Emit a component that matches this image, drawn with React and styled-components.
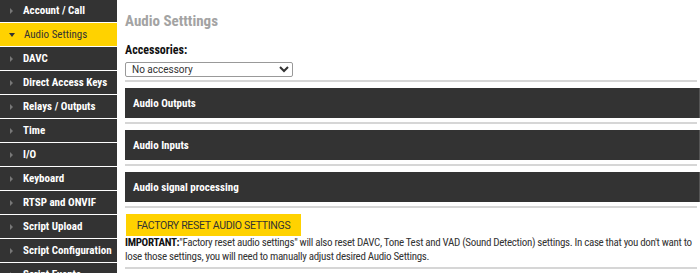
import React from "react";
import styled, { createGlobalStyle } from "styled-components";

const GlobalStyle = createGlobalStyle`
  body {
    margin: 0;
    background: #fff;
    font-family: "Liberation Sans Narrow", "Roboto Condensed", Roboto, sans-serif;
    overflow: hidden;
  }
`;

const Page = styled.div`
  display: flex;
  width: 700px;
  height: 273px;
  overflow: hidden;
`;

const Sidebar = styled.nav`
  width: 117px;
  flex-shrink: 0;
  display: flex;
  flex-direction: column;
  gap: 1px;
  margin-top: -1px;
`;

const NavItem = styled.div`
  height: 23px;
  flex-shrink: 0;
  display: flex;
  align-items: center;
  background: ${({ active }) => (active ? "#ffd200" : "#333")};
  color: ${({ active }) => (active ? "#333" : "#fff")};
  font-size: 11px;
  font-weight: ${({ active }) => (active ? "normal" : "bold")};
  padding-left: 9px;
  white-space: nowrap;
`;

const Arrow = styled.span`
  width: 0;
  height: 0;
  ${({ open }) =>
    open
      ? `border-left: 3px solid transparent;
         border-right: 3px solid transparent;
         border-top: 4px solid #333;
         margin-right: 9px;`
      : `border-top: 3px solid transparent;
         border-bottom: 3px solid transparent;
         border-left: 3px solid #777;
         margin-left: 1px;
         margin-right: 10px;`}
`;

const Main = styled.main`
  flex: 1;
  min-width: 0;
  padding: 11px 2px 0 8px;
  display: flex;
  flex-direction: column;
  & > * {
    flex-shrink: 0;
  }
`;

const Title = styled.h1`
  margin: 0;
  font-size: 15px;
  font-weight: bold;
  color: #a3a3a3;
  line-height: 20px;
`;

const Label = styled.div`
  margin-top: 12px;
  font-size: 12px;
  font-weight: bold;
  color: #111;
  line-height: 14px;
`;

const Select = styled.select`
  margin-top: 5px;
  width: 168px;
  height: 15px;
  padding: 0 2px;
  font-family: "Liberation Sans Narrow", Roboto, sans-serif;
  font-size: 10px;
  color: #333;
  border: 1px solid #999;
  border-radius: 2px;
  background: #fff;
`;

const Rule = styled.div`
  height: 2px;
  margin-right: 1px;
  background: #d6d6d6;
  margin-top: ${({ top }) => top}px;
`;

const Section = styled.div`
  height: 30px;
  margin-top: 6px;
  margin-right: -2px;
  background: #333;
  border-right: 1px solid #555;
  color: #fff;
  font-size: 11px;
  font-weight: bold;
  display: flex;
  align-items: center;
  padding-left: 8px;
`;

const ResetButton = styled.button`
  margin: 6px 0 0 1px;
  align-self: flex-start;
  width: 175px;
  height: 22px;
  border: none;
  background: #ffd200;
  color: #333;
  font-family: "Liberation Sans Narrow", Roboto, sans-serif;
  font-size: 10.5px;
  letter-spacing: -0.3px;
  white-space: nowrap;
  padding: 0;
`;

const Note = styled.p`
  margin: 0;
  font-size: 11px;
  line-height: 13.5px;
  letter-spacing: -0.32px;
  color: #333;
  b {
    color: #111;
  }
`;

const navItems = [
  "Account / Call",
  "Audio Settings",
  "DAVC",
  "Direct Access Keys",
  "Relays / Outputs",
  "Time",
  "I/O",
  "Keyboard",
  "RTSP and ONVIF",
  "Script Upload",
  "Script Configuration",
  "Script Events",
];

const sections = ["Audio Outputs", "Audio Inputs", "Audio signal processing"];

export default function App() {
  return (
    <>
      <GlobalStyle />
      <Page>
        <Sidebar>
          {navItems.map((item) => {
            const active = item === "Audio Settings";
            return (
              <NavItem key={item} active={active}>
                <Arrow open={active} />
                {item}
              </NavItem>
            );
          })}
        </Sidebar>
        <Main>
          <Title>Audio Setttings</Title>
          <Label>Accessories:</Label>
          <Select defaultValue="none">
            <option value="none">No accessory</option>
          </Select>
          <Rule top={3} />
          {sections.map((s) => (
            <React.Fragment key={s}>
              <Section>{s}</Section>
              <Rule top={4} />
            </React.Fragment>
          ))}
          <ResetButton>FACTORY RESET AUDIO SETTINGS</ResetButton>
          <Note>
            <b>IMPORTANT:</b>"Factory reset audio settings" will also reset DAVC, Tone Test and VAD (Sound
            Detection) settings. In case that you don't want to lose those settings, you will need to
            manually adjust desired Audio Settings.
          </Note>
          <Rule top={4} />
        </Main>
      </Page>
    </>
  );
}
